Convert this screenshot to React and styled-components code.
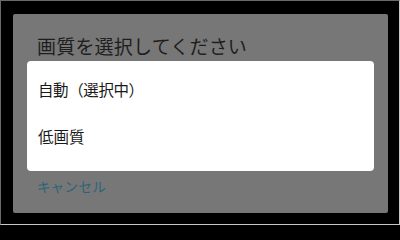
import React from 'react';
import styled, { createGlobalStyle } from 'styled-components';

const GlobalStyle = createGlobalStyle`
  html, body {
    margin: 0;
    padding: 0;
    background: #000;
  }
  body {
    font-family: "Noto Sans CJK JP", "Noto Sans", sans-serif;
  }
`;

const Screen = styled.div`
  box-sizing: border-box;
  width: 400px;
  height: 225px;
  background: #000;
  border-top: 1px solid #6a6a6a;
  border-left: 1px solid #6a6a6a;
  border-right: 1px solid #c8c8c8;
  border-bottom: 1px solid #c8c8c8;
  padding: 13px 11px 11px 12px;
  display: flex;
`;

const Dialog = styled.div`
  flex: 1;
  background: #777777;
  border-radius: 2px;
  display: flex;
  flex-direction: column;
`;

const Title = styled.div`
  box-sizing: border-box;
  height: 47px;
  padding: 21px 0 0 24px;
  font-size: 19px;
  line-height: 22px;
  letter-spacing: 0.2px;
  color: #1e1e1e;
  white-space: nowrap;
`;

const OptionList = styled.div`
  margin: 0 14px;
  height: 110px;
  box-sizing: border-box;
  padding: 4px 0 12px;
  background: #fff;
  border-radius: 4px;
  display: flex;
  flex-direction: column;
`;

const Option = styled.div`
  height: 47px;
  display: flex;
  align-items: center;
  padding-left: 11px;
  font-size: 15.5px;
  color: #1a1a1a;
  letter-spacing: ${(p) => (p.$tight ? '-0.4px' : '0')};
`;

const Cancel = styled.div`
  padding: 7px 0 0 24px;
  font-size: 13.5px;
  line-height: 16px;
  color: #2a6579;
  letter-spacing: 0.3px;
`;

export default function App() {
  return (
    <>
      <GlobalStyle />
      <Screen>
        <Dialog>
          <Title>画質を選択してください</Title>
          <OptionList>
            <Option $tight>自動（選択中）</Option>
            <Option>低画質</Option>
          </OptionList>
          <Cancel>キャンセル</Cancel>
        </Dialog>
      </Screen>
    </>
  );
}
